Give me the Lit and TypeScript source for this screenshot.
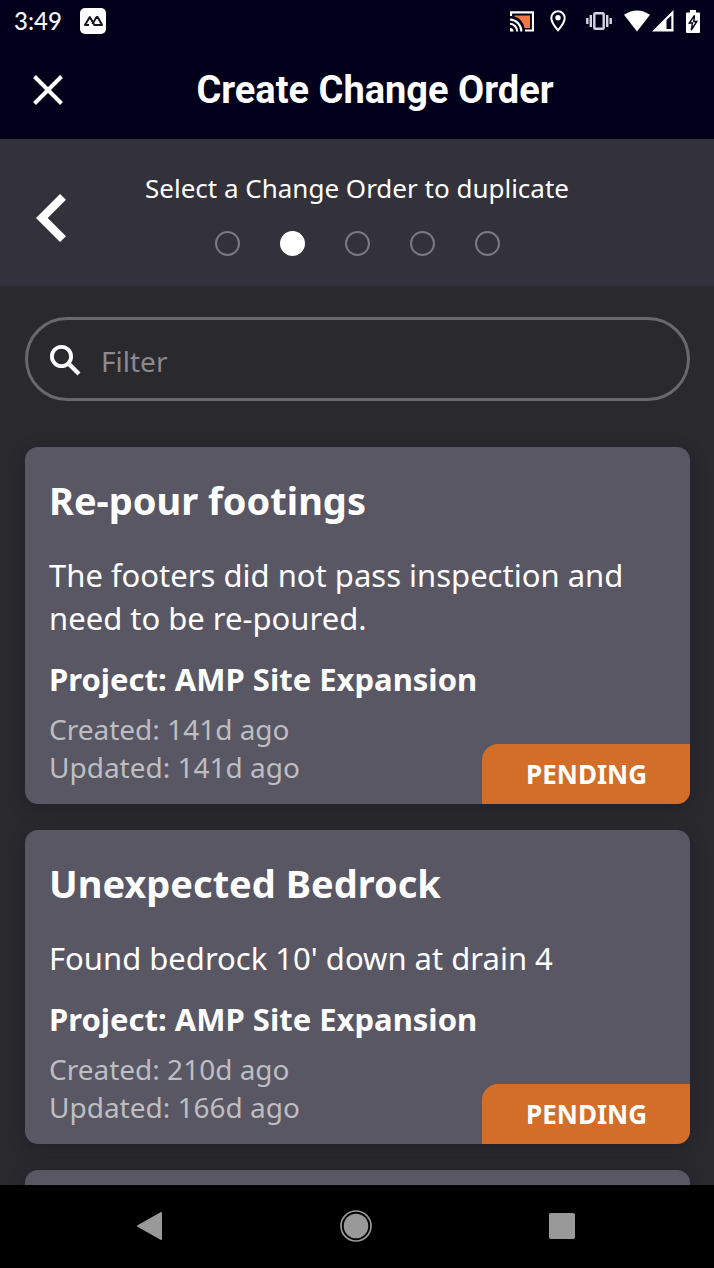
import { LitElement, html, css } from "lit";
import { customElement, property, state } from "lit/decorators.js";
import { classMap } from "lit/directives/class-map.js";

interface ChangeOrder {
  title: string;
  description: string;
  project: string;
  created: string;
  updated: string;
  status: string;
}

const ORDERS: ChangeOrder[] = [
  {
    title: "Re-pour footings",
    description: "The footers did not pass inspection and need to be re-poured.",
    project: "AMP Site Expansion",
    created: "141d ago",
    updated: "141d ago",
    status: "PENDING",
  },
  {
    title: "Unexpected Bedrock",
    description: "Found bedrock 10' down at drain 4",
    project: "AMP Site Expansion",
    created: "210d ago",
    updated: "166d ago",
    status: "PENDING",
  },
];

@customElement("status-bar")
class StatusBar extends LitElement {
  static styles = css`
    :host {
      display: flex;
      align-items: center;
      justify-content: space-between;
      height: 42px;
      padding: 0 14px;
      color: #f4f4fa;
      font: 500 24px/30px Lato, sans-serif;
    }
    .group {
      display: flex;
      align-items: center;
    }
    .left {
      gap: 18px;
    }
    svg {
      display: block;
    }
    .cast {
      margin-right: 16px;
    }
    .pin {
      margin-right: 20px;
    }
    .vibrate {
      margin-right: 12px;
    }
    .wifi {
      margin-right: 2px;
    }
    .signal {
      margin-right: 12px;
    }
  `;

  render() {
    return html`
      <div class="group left">
        <span>3:49</span>
        <svg width="26" height="26" viewBox="0 0 26 26" aria-hidden="true">
          <rect width="26" height="26" rx="5" fill="#fff" />
          <path d="M9 17H5L9.8 9L14.4 17H22L17.6 9H16.6L12.4 16" fill="none" stroke="#15151f" stroke-width="2" stroke-linejoin="round" />
        </svg>
      </div>
      <div class="group">
        <svg class="cast" width="24" height="21" viewBox="0 0 24 21" aria-hidden="true">
          <path d="M4.5 4.5H20V17H14.5Q12.5 7.5 4.5 5.5Z" fill="#f0784a" />
          <path d="M1 5V1.3H23V19.5H15" fill="none" stroke="#fff" stroke-width="2.2" />
          <path d="M0 17A3.5 3.5 0 0 1 3.5 20.5H0Z" fill="#fff" />
          <path d="M0 12.8A7.7 7.7 0 0 1 7.2 20.5M0 8.5A12 12 0 0 1 11.4 20.5" fill="none" stroke="#fff" stroke-width="2" />
        </svg>
        <svg class="pin" width="16" height="22" viewBox="0 0 16 22" aria-hidden="true">
          <path d="M8 1.2A6.7 6.7 0 0 0 1.3 8C1.3 12.6 8 20.3 8 20.3S14.7 12.6 14.7 8A6.7 6.7 0 0 0 8 1.2Z" fill="none" stroke="#fff" stroke-width="2" />
          <circle cx="8" cy="7.8" r="2.7" fill="#fff" />
        </svg>
        <svg class="vibrate" width="26" height="18" viewBox="0 0 26 18" aria-hidden="true">
          <rect x="8.3" y="1.2" width="9.4" height="15.6" rx="1" fill="none" stroke="#d4d4e2" stroke-width="2.4" />
          <path d="M4.8 3V15M21.2 3V15M1.3 6V12M24.7 6V12" stroke="#d4d4e2" stroke-width="2.4" />
        </svg>
        <svg class="wifi" width="26" height="22" viewBox="0 0 26 22" aria-hidden="true">
          <path d="M0 4.8Q13-4 26 4.8L13 21.5Z" fill="#fff" />
        </svg>
        <svg class="signal" width="22" height="22" viewBox="0 0 22 22" aria-hidden="true">
          <path d="M0 21.5 21.5 0V21.5Z" fill="#fff" />
          <path d="M14.5 10 19.3 5.5V19H14.5Z" fill="#00001a" />
        </svg>
        <svg width="14" height="23" viewBox="0 0 14 23" aria-hidden="true">
          <path d="M4 0H10V2.5H13Q14 2.5 14 3.5V22Q14 23 13 23H1Q0 23 0 22V3.5Q0 2.5 1 2.5H4Z" fill="#fff" />
          <path d="M8.5 5.5 3.3 13H6.4L5.3 20 10.8 11.5H7.8Z" fill="#fff" stroke="#00001a" stroke-width="1.4" />
        </svg>
      </div>
    `;
  }
}

@customElement("order-card")
class OrderCard extends LitElement {
  @property({ attribute: false }) order!: ChangeOrder;

  static styles = css`
    :host {
      display: block;
    }
    .card {
      position: relative;
      overflow: hidden;
      padding: 27px 24px 18px;
      border-radius: 13px;
      background: #595764;
      color: #fff;
    }
    h2,
    p {
      margin: 0;
    }
    h2 {
      margin-bottom: 28px;
      font-size: 38px;
      line-height: 52px;
      font-weight: 700;
    }
    .text {
      margin-bottom: 18px;
      font-size: 31px;
      line-height: 43px;
    }
    .project {
      margin-bottom: 9px;
      font-size: 31px;
      line-height: 43px;
      font-weight: 700;
    }
    .date {
      font-size: 28px;
      line-height: 38px;
      color: #bebec1;
    }
    .badge {
      position: absolute;
      right: 0;
      bottom: 0;
      padding: 12px 43px 12px 44px;
      border-top-left-radius: 16px;
      background: #d26e2a;
      font-size: 26px;
      line-height: 36px;
      font-weight: 700;
    }
  `;

  render() {
    const o = this.order;
    return html`
      <article class="card">
        <h2>${o.title}</h2>
        <p class="text">${o.description}</p>
        <p class="project">Project: ${o.project}</p>
        <p class="date">Created: ${o.created}</p>
        <p class="date">Updated: ${o.updated}</p>
        <span class="badge">${o.status}</span>
      </article>
    `;
  }
}

@customElement("app-root")
class AppRoot extends LitElement {
  @state() private filter = "";
  private steps = 5;
  private current = 1;

  static styles = css`
    :host {
      display: flex;
      flex-direction: column;
      height: 100vh;
      background: #2a292e;
      color: #fff;
      font-family: "Noto Sans", sans-serif;
    }
    button {
      display: grid;
      place-items: center;
      padding: 0;
      border: 0;
      background: none;
      color: inherit;
    }
    svg {
      display: block;
    }
    .top {
      flex: none;
      background: #00001a;
    }
    .title-bar {
      display: grid;
      grid-template-columns: 96px 1fr 60px;
      align-items: center;
      height: 95px;
      padding-bottom: 2px;
    }
    h1 {
      margin: 0;
      font: 700 38px/46px Roboto, sans-serif;
      text-align: center;
    }
    .stepper {
      flex: none;
      display: grid;
      grid-template-columns: 102px 1fr 102px;
      align-items: center;
      height: 147px;
      background: #33323b;
    }
    .back {
      height: 80px;
      margin-top: 11px;
    }
    .steps {
      display: flex;
      flex-direction: column;
      align-items: center;
      gap: 25px;
    }
    .steps p {
      margin: 0;
      font-size: 26px;
      line-height: 36px;
      white-space: nowrap;
    }
    .dots {
      display: flex;
      gap: 40px;
      margin: 0;
      padding: 0;
      list-style: none;
    }
    .dot {
      box-sizing: border-box;
      width: 25px;
      height: 25px;
      border: 2px solid #7b7a84;
      border-radius: 50%;
    }
    .dot.active {
      border-color: #fff;
      background: #fff;
    }
    main {
      flex: 1;
      min-height: 0;
      overflow-y: auto;
      scrollbar-width: none;
      padding: 31px 24px 0 25px;
    }
    .search {
      display: flex;
      align-items: center;
      gap: 20px;
      height: 75px;
      padding: 3px 22px 0;
      border: 3px solid #69686d;
      border-radius: 42px;
    }
    .search input {
      flex: 1;
      min-width: 0;
      padding: 0;
      border: 0;
      outline: 0;
      background: none;
      color: #fff;
      font: 400 28px/38px "Noto Sans", sans-serif;
    }
    .search input::placeholder {
      color: #8b8a8f;
      opacity: 1;
    }
    .list {
      display: flex;
      flex-direction: column;
      gap: 26px;
      margin-top: 46px;
    }
    .list order-card,
    .next {
      border-radius: 13px;
      box-shadow: 0 4px 16px rgba(20, 20, 28, 0.35);
    }
    .next {
      height: 120px;
      background: #595764;
    }
    .nav {
      flex: none;
      display: grid;
      grid-template-columns: repeat(3, 206px);
      justify-content: center;
      height: 81px;
      padding: 0 2px 2px 0;
      background: #000;
    }
  `;

  private onInput(e: Event) {
    this.filter = (e.target as HTMLInputElement).value;
  }

  private dots() {
    return Array.from(
      { length: this.steps },
      (_, i) => html`<li class=${classMap({ dot: true, active: i === this.current })}></li>`
    );
  }

  render() {
    const query = this.filter.toLowerCase();
    const shown = ORDERS.filter((o) => o.title.toLowerCase().includes(query));
    return html`
      <header class="top">
        <status-bar></status-bar>
        <div class="title-bar">
          <button aria-label="Close">
            <svg width="30" height="30" viewBox="0 0 30 30"><path d="M1.5 1.5 28.5 28.5M28.5 1.5 1.5 28.5" stroke="#fff" stroke-width="4" /></svg>
          </button>
          <h1>Create Change Order</h1>
        </div>
      </header>
      <section class="stepper">
        <button class="back" aria-label="Back">
          <svg width="30" height="48" viewBox="0 0 30 48"><path d="M24 0 30 5.7 11.7 24 30 42.3 24 48 0 24Z" fill="#fff" /></svg>
        </button>
        <div class="steps">
          <p>Select a Change Order to duplicate</p>
          <ol class="dots">${this.dots()}</ol>
        </div>
      </section>
      <main>
        <label class="search">
          <svg width="31" height="31" viewBox="0 0 31 31" aria-hidden="true">
            <circle cx="11.5" cy="11.5" r="9.6" fill="none" stroke="#fff" stroke-width="3.8" />
            <path d="M18.5 18.5 29 29" stroke="#fff" stroke-width="4.2" />
          </svg>
          <input type="text" placeholder="Filter" aria-label="Filter" .value=${this.filter} @input=${this.onInput} />
        </label>
        <div class="list">
          ${shown.map((o) => html`<order-card .order=${o}></order-card>`)}
          <div class="next"></div>
        </div>
      </main>
      <nav class="nav">
        <button aria-label="System back">
          <svg width="26" height="28" viewBox="0 0 26 28"><path d="M1 14 24 1V27Z" fill="#999" stroke="#999" stroke-width="2" stroke-linejoin="round" /></svg>
        </button>
        <button aria-label="Home">
          <svg width="32" height="32" viewBox="0 0 32 32"><circle cx="16" cy="16" r="15" fill="none" stroke="#999" stroke-width="1.7" /><circle cx="16" cy="16" r="12.3" fill="#999" /></svg>
        </button>
        <button aria-label="Recent apps">
          <svg width="26" height="26" viewBox="0 0 26 26"><rect width="26" height="26" rx="2" fill="#999" /></svg>
        </button>
      </nav>
    `;
  }
}
